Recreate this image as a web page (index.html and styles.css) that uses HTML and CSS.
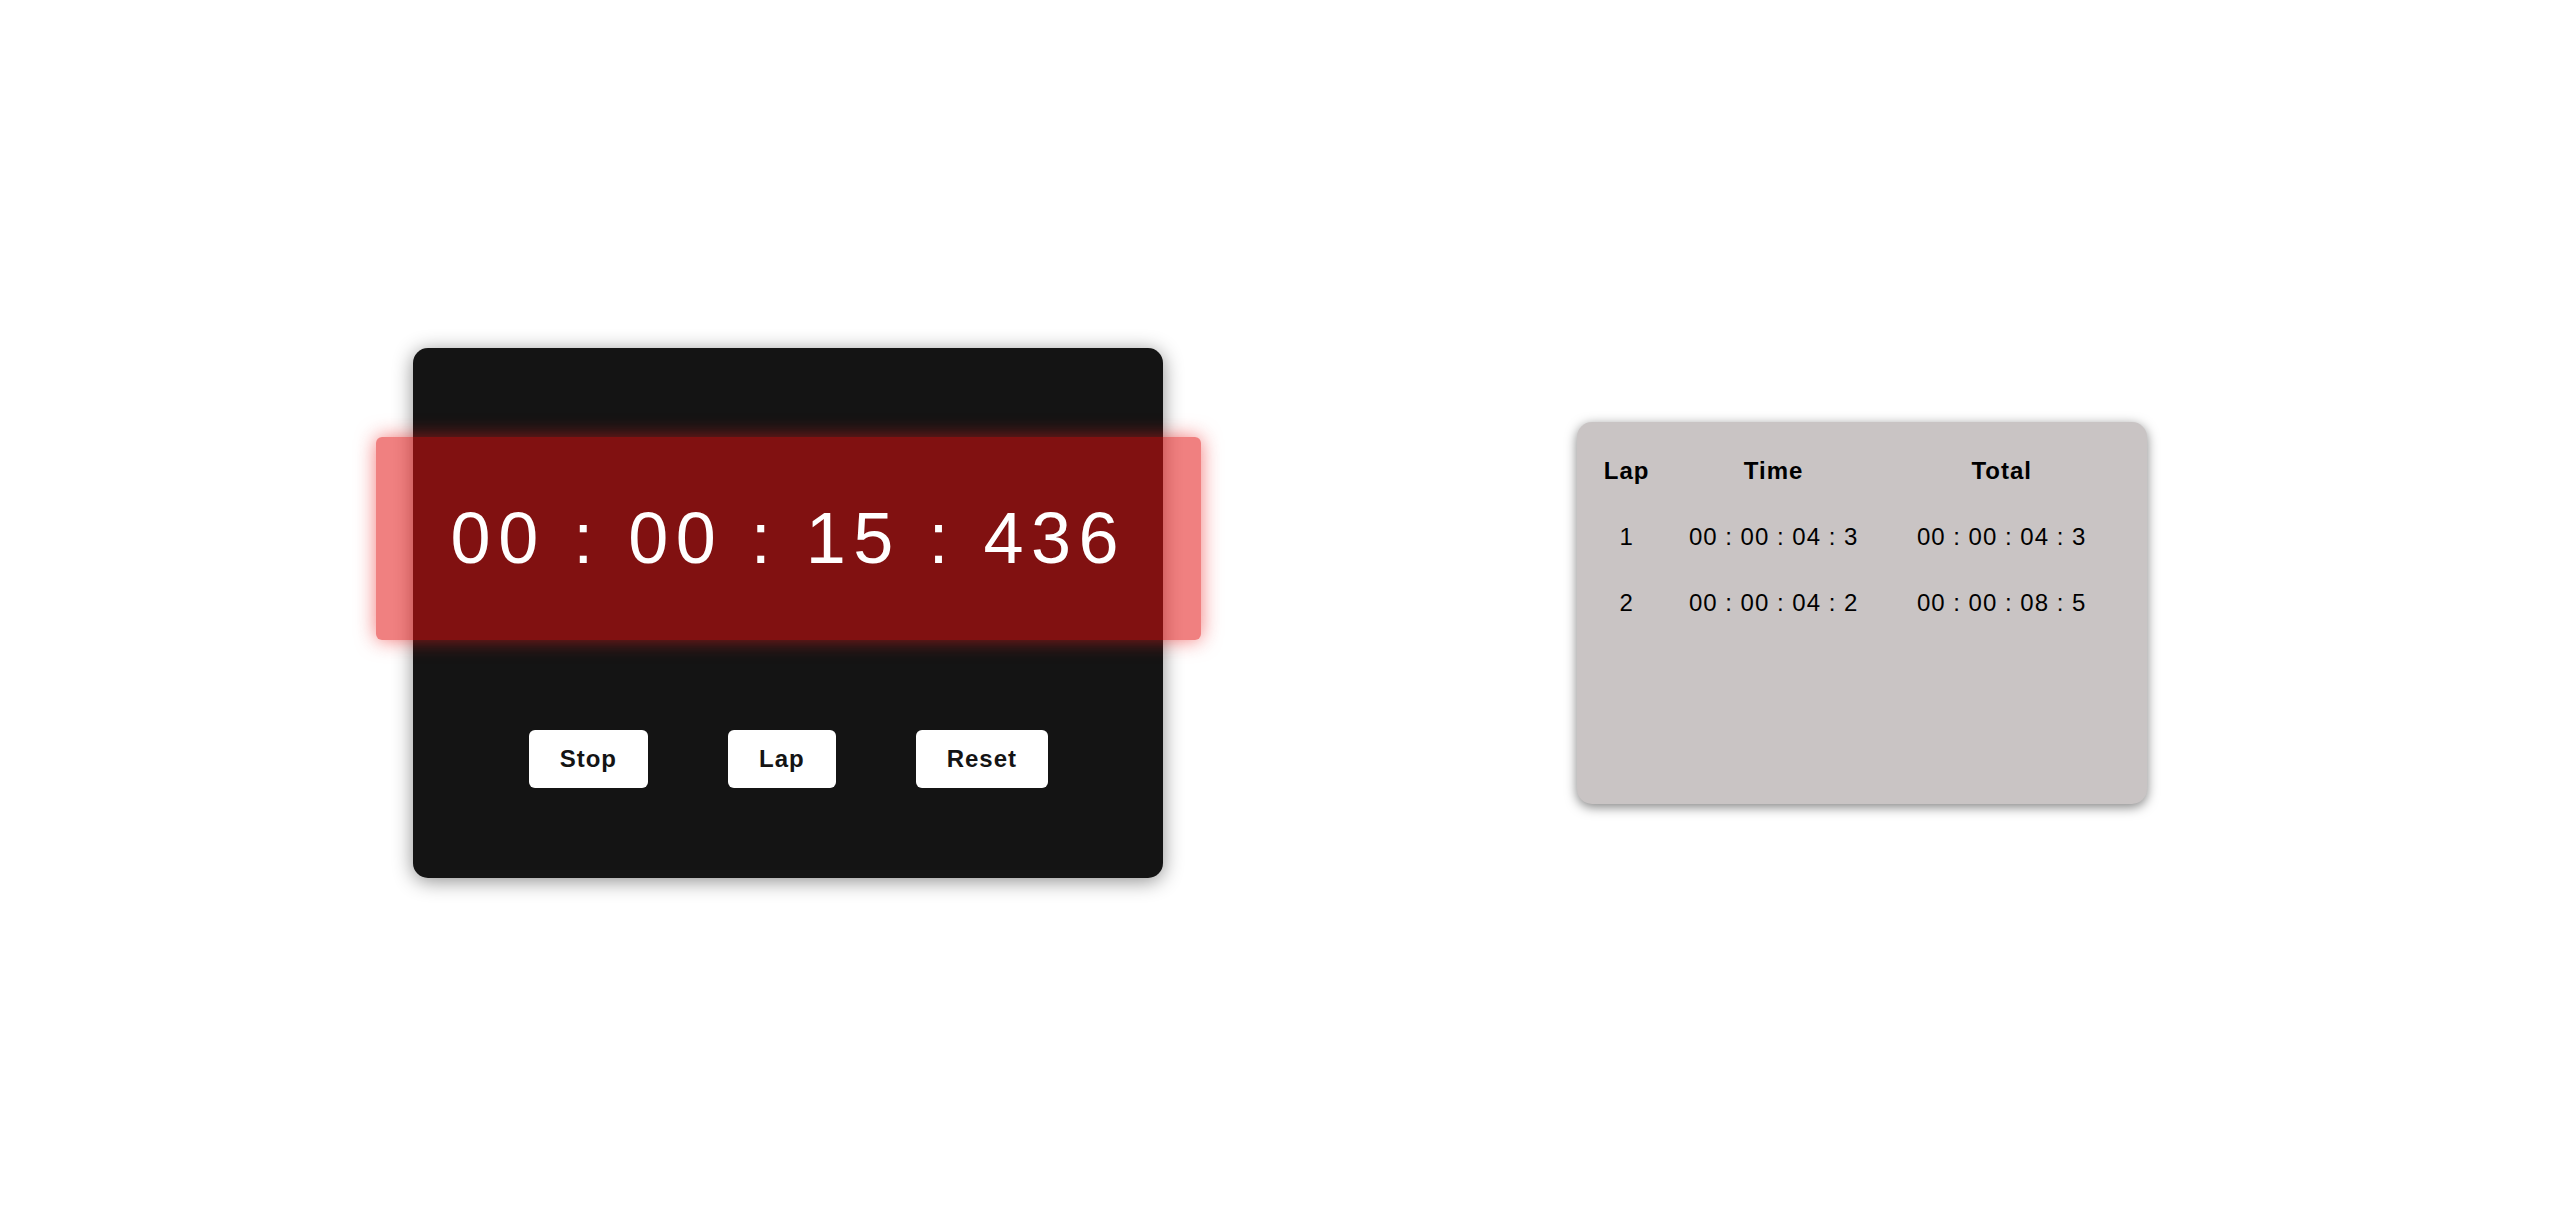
FILE: index.html
```html
<!DOCTYPE html>
<html lang="en">
<head>
<meta charset="utf-8">
<title>Stopwatch</title>
<link rel="stylesheet" href="styles.css">
</head>
<body>
<main class="page">
  <section class="watch">
    <div class="display">00 : 00 : 15 : 436</div>
    <div class="controls">
      <button class="btn btn-stop">Stop</button>
      <button class="btn btn-lap">Lap</button>
      <button class="btn btn-reset">Reset</button>
    </div>
  </section>
  <section class="laps">
    <table class="lap-table">
      <thead>
        <tr><th class="c-lap">Lap</th><th class="c-time">Time</th><th class="c-total">Total</th></tr>
      </thead>
      <tbody>
        <tr><td>1</td><td>00 : 00 : 04 : 3</td><td>00 : 00 : 04 : 3</td></tr>
        <tr><td>2</td><td>00 : 00 : 04 : 2</td><td>00 : 00 : 08 : 5</td></tr>
      </tbody>
    </table>
  </section>
</main>
</body>
</html>
```
FILE: styles.css
```css
* { box-sizing: border-box; }
html, body {
  margin: 0;
  padding: 0;
  background: #ffffff;
  font-family: "Liberation Sans", Arial, sans-serif;
}
.page {
  height: 100vh;
  display: flex;
  justify-content: space-evenly;
  align-items: center;
}
.watch {
  width: 750px;
  height: 530px;
  background: #141414;
  border-radius: 15px;
  box-shadow: 0 3px 20px rgba(0, 0, 0, 0.45);
  padding: 89px 0 90px;
  display: flex;
  flex-direction: column;
}
.display {
  margin: 0 -37.5px;
  height: 203px;
  display: flex;
  align-items: center;
  justify-content: center;
  background: rgba(227, 15, 15, 0.53);
  border-radius: 6px;
  box-shadow: 0 0 20px rgba(235, 30, 30, 0.6);
  color: #ffffff;
  font-size: 72px;
  letter-spacing: 7.5px;
  line-height: 1;
}
.controls {
  margin-top: 90px;
  display: flex;
  justify-content: center;
  gap: 80px;
}
.btn {
  font-family: "Liberation Sans", Arial, sans-serif;
  font-size: 24px;
  font-weight: bold;
  letter-spacing: 1px;
  color: #141414;
  background: #ffffff;
  border: none;
  border-radius: 6px;
  padding: 15px 31px;
  line-height: 28px;
  height: 58px;
}
.laps {
  width: 570px;
  height: 382px;
  background: #c9c4c4;
  border-radius: 15px;
  box-shadow: 0 3px 12px rgba(0, 0, 0, 0.5);
  padding: 16px 31px 0 17px;
}
.lap-table {
  border-collapse: collapse;
  table-layout: fixed;
  width: 522px;
  color: #000000;
  font-size: 24px;
  letter-spacing: 1px;
}
.lap-table th, .lap-table td {
  padding: 19px 0;
  line-height: 28px;
  text-align: center;
  white-space: nowrap;
}
.lap-table th { font-weight: bold; }
.c-lap { width: 66px; }
.c-time { width: 228px; }
.c-total { width: 228px; }
```
